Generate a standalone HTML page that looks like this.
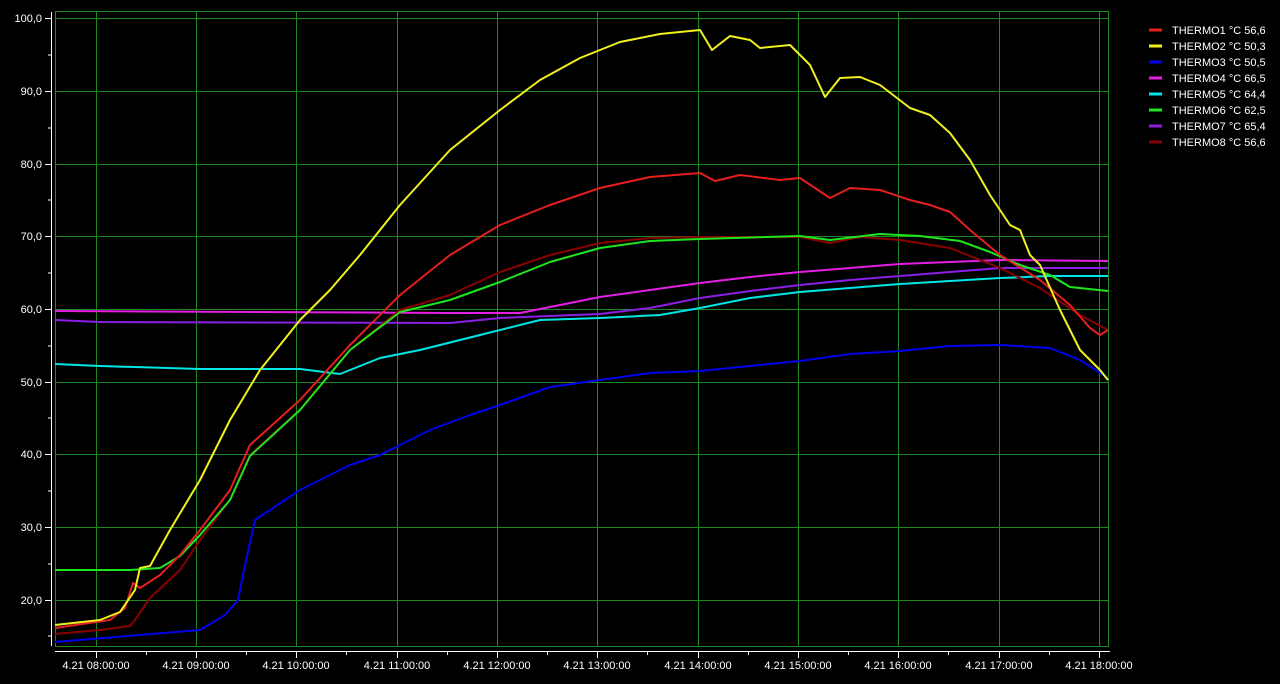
<!DOCTYPE html>
<html><head><style>
html,body{margin:0;padding:0;background:#000;width:1280px;height:684px;overflow:hidden}
text{font-family:"Liberation Sans",sans-serif;font-size:11px;fill:#fff}
</style></head><body>
<svg width="1280" height="684" viewBox="0 0 1280 684" xmlns="http://www.w3.org/2000/svg">
<rect width="1280" height="684" fill="#000"/>
<g stroke="#1e8a1e" stroke-width="1" fill="none">
<rect x="55.5" y="11.5" width="1053" height="635"/>
<path d="M55 18.5H1108M55 91.5H1108M55 164.5H1108M55 236.5H1108M55 309.5H1108M55 382.5H1108M55 454.5H1108M55 527.5H1108M55 600.5H1108"/>
<path d="M96.5 11V646M196.5 11V646M296.5 11V646M397.5 11V646M497.5 11V646M597.5 11V646M698.5 11V646M798.5 11V646M898.5 11V646M999.5 11V646M1099.5 11V646"/>
</g>
<g stroke="#fff" stroke-width="1" fill="none">
<path d="M51.5 12V646M55 651.5H1110"/>
<path d="M45 18.5H51M45 91.5H51M45 164.5H51M45 236.5H51M45 309.5H51M45 382.5H51M45 454.5H51M45 527.5H51M45 600.5H51"/>
<path d="M48 55H51M48 128H51M48 200H51M48 273H51M48 346H51M48 418H51M48 491H51M48 564H51M48 636H51"/>
<path d="M96.5 651V658M196.5 651V658M296.5 651V658M397.5 651V658M497.5 651V658M597.5 651V658M698.5 651V658M798.5 651V658M898.5 651V658M999.5 651V658M1099.5 651V658"/>
<path d="M146.5 651V655M246.5 651V655M346.5 651V655M447.5 651V655M547.5 651V655M647.5 651V655M748.5 651V655M848.5 651V655M948.5 651V655M1049.5 651V655"/>
</g>
<g text-anchor="end">
<text x="42" y="22">100,0</text><text x="42" y="95">90,0</text><text x="42" y="168">80,0</text><text x="42" y="240">70,0</text><text x="42" y="313">60,0</text><text x="42" y="386">50,0</text><text x="42" y="458">40,0</text><text x="42" y="531">30,0</text><text x="42" y="604">20,0</text>
</g>
<g text-anchor="middle">
<text x="96" y="669">4.21 08:00:00</text><text x="196" y="669">4.21 09:00:00</text><text x="296" y="669">4.21 10:00:00</text><text x="397" y="669">4.21 11:00:00</text><text x="497" y="669">4.21 12:00:00</text><text x="597" y="669">4.21 13:00:00</text><text x="698" y="669">4.21 14:00:00</text><text x="798" y="669">4.21 15:00:00</text><text x="898" y="669">4.21 16:00:00</text><text x="999" y="669">4.21 17:00:00</text><text x="1099" y="669">4.21 18:00:00</text>
</g>
<g fill="none" stroke-width="2" stroke-linejoin="round">
<polyline stroke="#0000ee" points="55,642 200,630 225,615 238,600 245,565 255,520 270,510 300,490 330,475 350,465 380,455 400,445 430,430 470,415 500,405 550,387 600,380 650,373 700,371 750,366 800,361 850,354 900,351 950,346 1000,345 1050,348 1080,360 1108,378"/>
<polyline stroke="#00e5e5" points="55,364 100,366 200,369 300,369 340,374 380,358 420,350 480,335 540,320 600,318 660,315 700,308 750,298 800,292 850,288 900,284 950,281 1000,278 1050,276 1108,276"/>
<polyline stroke="#8a1ee5" points="55,320 100,322 450,323 500,318 600,314 650,308 700,298 750,291 800,285 850,280 900,276 950,272 1000,268 1108,268"/>
<polyline stroke="#e51ee5" points="55,311 450,313 520,313 560,305 600,297 650,290 700,283 750,277 800,272 850,268 900,264 950,262 1000,260 1108,261"/>
<polyline stroke="#8a0000" points="55,634 100,630 130,626 135,620 150,598 180,570 200,540 230,500 250,455 300,410 350,350 400,310 450,295 500,272 550,255 600,243 650,238 700,237 800,237 830,243 860,237 900,240 950,248 1000,268 1040,288 1080,315 1108,330"/>
<polyline stroke="#1ee51e" points="55,570 130,570 160,568 180,556 200,535 230,500 250,456 300,410 350,350 400,312 450,300 500,282 550,262 600,248 650,241 700,239 800,236 830,240 880,234 920,236 960,241 990,252 1020,265 1050,275 1070,287 1108,291"/>
<polyline stroke="#e51e1e" points="55,628 110,620 125,608 133,583 140,588 160,575 180,555 200,530 230,490 250,445 300,400 350,345 400,295 450,255 500,225 550,205 600,188 650,177 700,173 715,181 740,175 780,180 800,178 830,198 850,188 880,190 910,200 930,205 950,212 970,230 1000,255 1040,280 1070,305 1090,328 1100,335 1108,330"/>
<polyline stroke="#f0f01e" points="55,625 100,620 120,612 135,590 140,568 150,566 170,530 200,480 230,420 260,370 300,320 330,290 360,255 400,205 450,150 500,110 540,80 580,58 620,42 660,34 700,30 712,50 730,36 750,40 760,48 790,45 810,65 825,97 840,78 860,77 880,85 910,108 930,115 950,133 970,160 990,195 1010,225 1020,230 1030,255 1040,265 1060,310 1080,350 1100,370 1108,380"/>
</g>
<g stroke-width="3">
<line x1="1149" y1="30" x2="1162" y2="30" stroke="#e51e1e"/>
<line x1="1149" y1="46" x2="1162" y2="46" stroke="#f0f01e"/>
<line x1="1149" y1="62" x2="1162" y2="62" stroke="#0000ee"/>
<line x1="1149" y1="78" x2="1162" y2="78" stroke="#e51ee5"/>
<line x1="1149" y1="94" x2="1162" y2="94" stroke="#00e5e5"/>
<line x1="1149" y1="110" x2="1162" y2="110" stroke="#1ee51e"/>
<line x1="1149" y1="126" x2="1162" y2="126" stroke="#8a1ee5"/>
<line x1="1149" y1="142" x2="1162" y2="142" stroke="#8a0000"/>
</g>
<g>
<text x="1172" y="34">THERMO1 °C  56,6</text>
<text x="1172" y="50">THERMO2 °C  50,3</text>
<text x="1172" y="66">THERMO3 °C  50,5</text>
<text x="1172" y="82">THERMO4 °C  66,5</text>
<text x="1172" y="98">THERMO5 °C  64,4</text>
<text x="1172" y="114">THERMO6 °C  62,5</text>
<text x="1172" y="130">THERMO7 °C  65,4</text>
<text x="1172" y="146">THERMO8 °C  56,6</text>
</g>
</svg>
</body></html>
